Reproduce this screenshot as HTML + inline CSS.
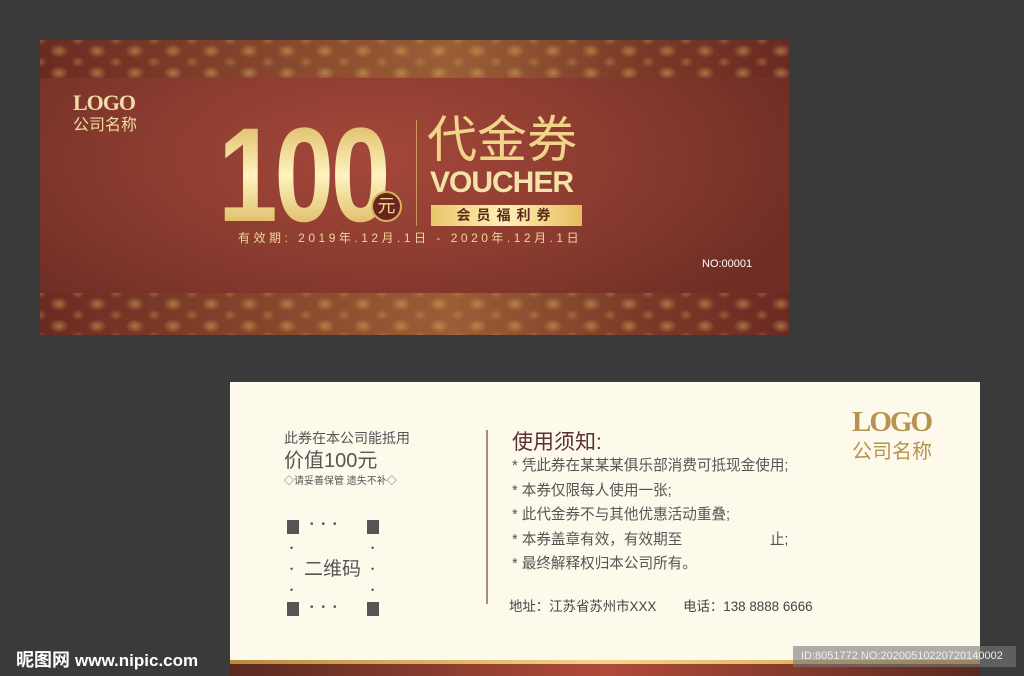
<!DOCTYPE html>
<html><head><meta charset="utf-8"><style>
*{margin:0;padding:0;box-sizing:border-box}
body{width:1024px;height:676px;background:#3a3a3a;position:relative;overflow:hidden;font-family:"Liberation Sans","Noto Sans CJK SC",sans-serif}
.a{position:absolute;white-space:nowrap}
.top{position:absolute;left:40px;top:40px;width:749px;height:295px;background:radial-gradient(ellipse 60% 70% at 45% 40%,#a4483a,#8a3b2f 55%,#6e2e25);overflow:hidden}
.orn{position:absolute;left:0;width:749px;background:radial-gradient(ellipse 14px 10px at 50% 50%,rgba(215,170,90,.55),rgba(0,0,0,0) 70%) 0 0/38px 22px,radial-gradient(ellipse 10px 8px at 50% 50%,rgba(200,150,80,.45),rgba(0,0,0,0) 70%) 19px 11px/38px 22px,linear-gradient(90deg,#6a2a22,#8a4a2e 35%,#9a5e36 55%,#7a3a28 80%,#6a2a22)}
.gold{background:linear-gradient(180deg,#d9b45a,#fff3c0 50%,#d6ad4c);-webkit-background-clip:text;color:transparent}
.bot{position:absolute;left:230px;top:382px;width:750px;height:294px;background:#fdfaec}
</style></head><body>
<div class="top">
 <div class="orn" style="top:0;height:38px"></div>
 <div class="orn" style="top:253px;height:42px"></div>
 <div class="a" style="left:33px;top:50px;font-family:'Liberation Serif',serif;font-size:22px;font-weight:bold;color:#f1dca3;letter-spacing:-1px">LOGO</div>
 <div class="a" style="left:33px;top:71px;font-size:16px;color:#f1dca3">公司名称</div>
 <div class="a gold" style="left:178px;top:72px;font-size:134px;font-weight:bold;line-height:128px;transform:scaleX(0.8);transform-origin:left;letter-spacing:-4px">100</div>
 <div class="a" style="left:331px;top:151px;width:31px;height:31px;border-radius:50%;background:#6a2420;border:2px solid #d6b05a;color:#f3d98c;font-size:18px;text-align:center;line-height:27px">元</div>
 <div style="position:absolute;left:376px;top:80px;width:1px;height:106px;background:#c79a5a"></div>
 <div class="a" style="left:387px;top:72px;font-size:50px;color:#f0d48a;line-height:56px">代金券</div>
 <div class="a" style="left:390px;top:126px;font-size:30px;font-weight:bold;color:#f5e2a8;letter-spacing:-1px">VOUCHER</div>
 <div class="a" style="left:391px;top:165px;width:151px;height:21px;background:linear-gradient(90deg,#e9c76a,#fff0b8,#e4bd5c);color:#5a2a1a;font-size:14px;font-weight:bold;text-align:center;line-height:21px;letter-spacing:6px">会员福利券</div>
 <div class="a" style="left:198px;top:189px;font-size:12px;color:#efd699;letter-spacing:3.5px">有效期: 2019年.12月.1日 - 2020年.12月.1日</div>
 <div class="a" style="left:662px;top:218px;font-size:11px;color:#fff">NO:00001</div>
</div>
<div class="bot">
 <div class="a" style="left:54px;top:46px;font-size:14px;color:#555">此券在本公司能抵用</div>
 <div class="a" style="left:54px;top:62px;font-size:20px;color:#555">价值100元</div>
 <div class="a" style="left:54px;top:90px;font-size:10px;color:#555">◇请妥善保管 遗失不补◇</div>
 <div style="position:absolute;left:57px;top:138px;width:12px;height:14px;background:#555"></div>
 <div style="position:absolute;left:137px;top:138px;width:12px;height:14px;background:#555"></div>
 <div style="position:absolute;left:57px;top:220px;width:12px;height:14px;background:#555"></div>
 <div style="position:absolute;left:137px;top:220px;width:12px;height:14px;background:#555"></div>
 <div class="a" style="left:80px;top:137px;font-size:10px;color:#555;letter-spacing:8px">•••</div>
 <div class="a" style="left:80px;top:220px;font-size:10px;color:#555;letter-spacing:8px">•••</div>
 <div class="a" style="left:60px;top:156px;font-size:9px;color:#555;line-height:21px">•<br>•<br>•</div>
 <div class="a" style="left:141px;top:156px;font-size:9px;color:#555;line-height:21px">•<br>•<br>•</div>
 <div class="a" style="left:74px;top:172px;font-size:19px;color:#555">二维码</div>
 <div style="position:absolute;left:256px;top:48px;width:2px;height:174px;background:#a88a7a"></div>
 <div class="a" style="left:282px;top:44px;font-size:21px;color:#5a3030">使用须知:</div>
 <div class="a" style="left:282px;top:72px;font-size:14.6px;color:#555;line-height:24.5px">* 凭此券在某某某俱乐部消费可抵现金使用;<br>* 本券仅限每人使用一张;<br>* 此代金券不与其他优惠活动重叠;<br>* 本券盖章有效，有效期至　　　　　　止;<br>* 最终解释权归本公司所有。</div>
 <div class="a" style="left:279px;top:213px;font-size:13.4px;color:#444">地址：江苏省苏州市XXX　　电话：138 8888 6666</div>
 <div class="a" style="left:622px;top:24px;font-family:'Liberation Serif',serif;font-size:29px;font-weight:bold;color:#b8924f;letter-spacing:-2px">LOGO</div>
 <div class="a" style="left:622px;top:53px;font-size:20px;color:#b8924f">公司名称</div>
 <div style="position:absolute;left:0;top:278px;width:750px;height:4px;background:linear-gradient(90deg,#b98a3a,#f3d58a,#c99a40)"></div>
 <div style="position:absolute;left:0;top:282px;width:750px;height:12px;background:linear-gradient(90deg,#5a2a20,#b04a38 50%,#5a2a20)"></div>
</div>
<div class="a" style="left:793px;top:646px;width:223px;height:21px;background:rgba(120,120,120,.6);color:#eee;font-size:11px;line-height:21px;padding-left:8px">ID:8051772 NO:20200510220720140002</div>
<div class="a" style="left:16px;top:646px;font-size:18px;font-weight:bold;color:#fff">昵图网 <span style="font-size:17px">www.nipic.com</span></div>
</body></html>
